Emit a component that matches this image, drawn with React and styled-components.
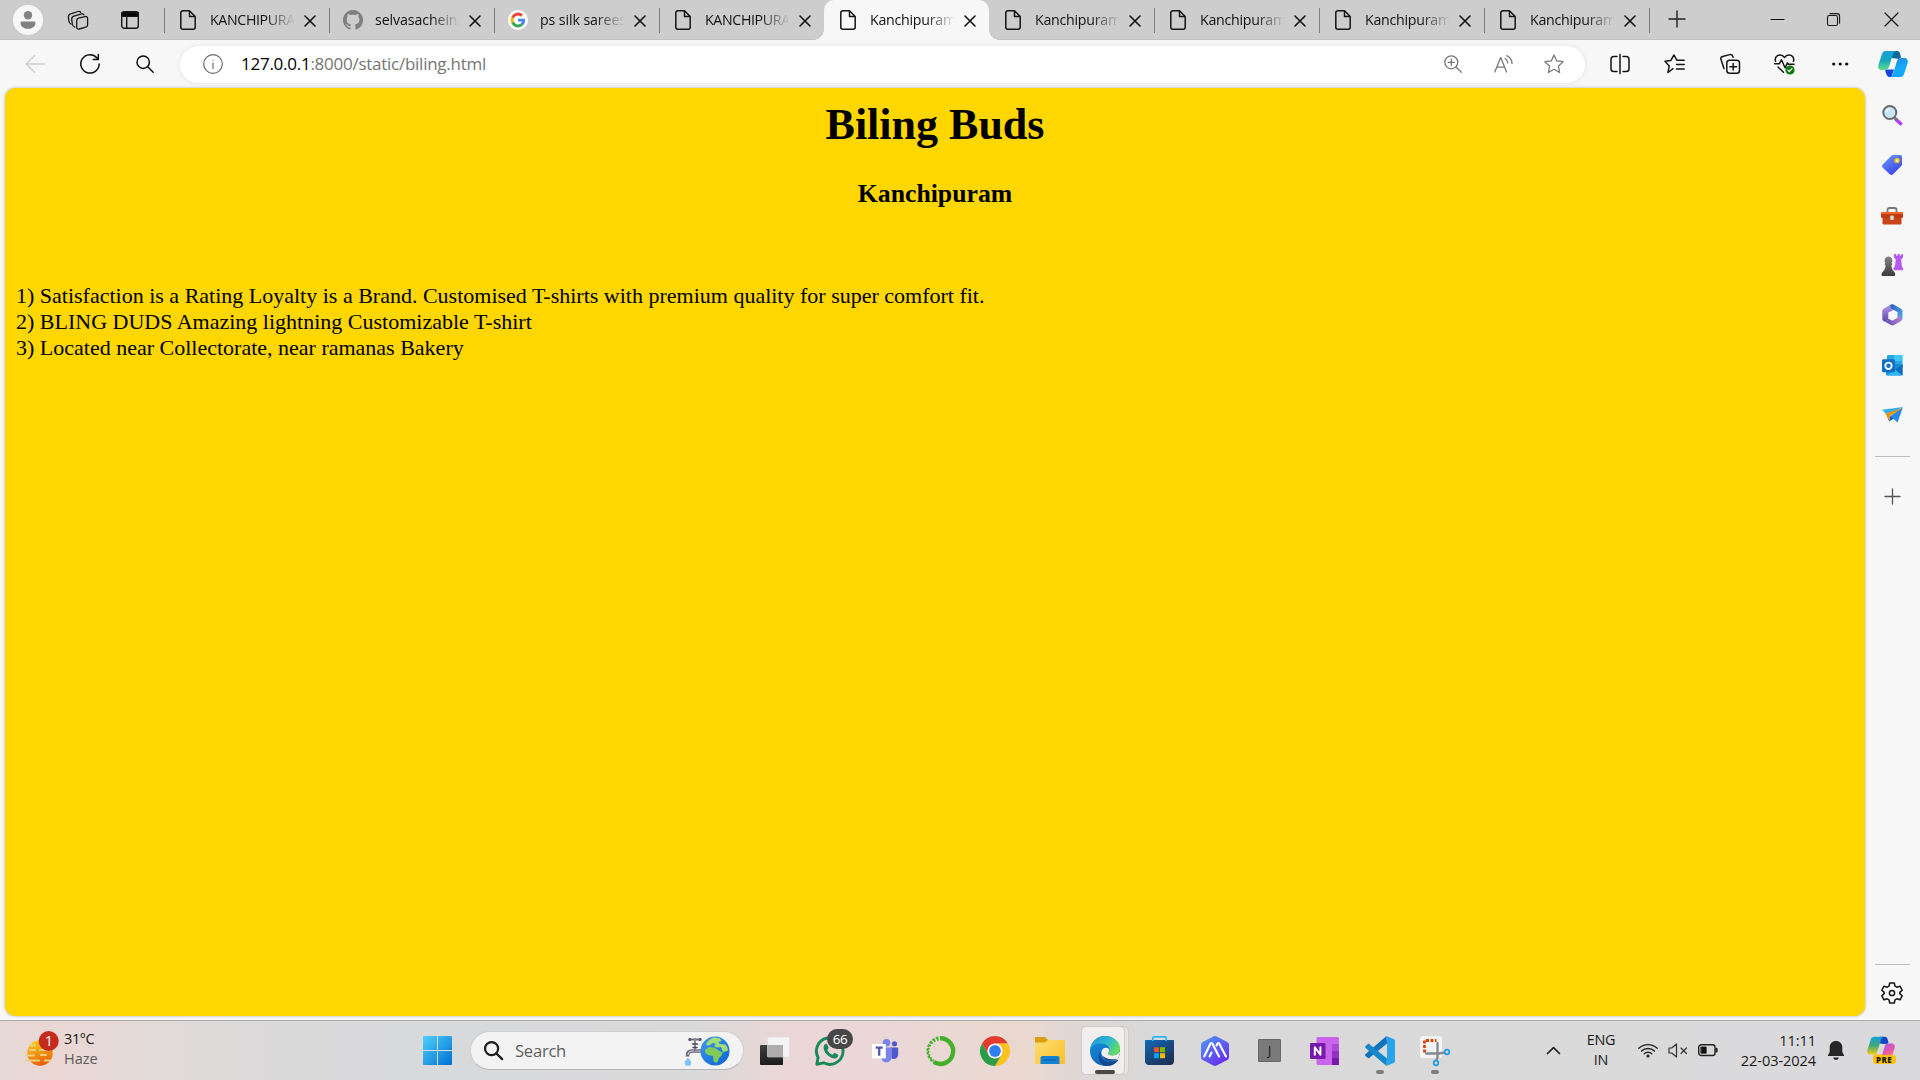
import React from "react";
import styled, { createGlobalStyle } from "styled-components";

const GlobalStyle = createGlobalStyle`
  * { box-sizing: border-box; }
  html, body { margin: 0; padding: 0; overflow: hidden; }
  body { font-family: "Open Sans", "Noto Sans", sans-serif; color: #1b1b1b; }
`;

const Screen = styled.div`
  width: 1920px;
  height: 1080px;
  display: flex;
  flex-direction: column;
  overflow: hidden;
  background: #f7f7f7;
`;

const Glyph = styled.svg.attrs((p) => ({
  width: p.$w,
  height: p.$h || p.$w,
  viewBox: p.viewBox || `0 0 ${p.$w} ${p.$h || p.$w}`,
}))`
  display: block;
  flex: none;
  overflow: visible;
  fill: ${(p) => p.$fill || "none"};
  stroke: ${(p) => p.$stroke || "none"};
  stroke-width: ${(p) => p.$sw || 1.4};
  stroke-linecap: round;
  stroke-linejoin: round;
`;

const Slot = styled.div`
  width: ${(p) => p.$w}px;
  height: ${(p) => (p.$h ? `${p.$h}px` : "100%")};
  flex: none;
  display: flex;
  align-items: center;
  justify-content: center;
`;

/* ---------- Tab strip ---------- */

const TabStrip = styled.div`
  height: 40px;
  flex: none;
  display: flex;
  align-items: stretch;
  background: #cdcdcd;
  box-shadow: inset 0 -1px 0 #c2c2c2;
  padding-left: 3px;
`;

const Avatar = styled.div`
  width: 30px;
  height: 30px;
  border-radius: 50%;
  background: #f7f7f7;
  display: flex;
  align-items: center;
  justify-content: center;
`;

const Tabs = styled.div`
  display: flex;
  padding-left: 8px;
`;

const Tab = styled.div`
  position: relative;
  width: 165px;
  display: flex;
  align-items: center;
  padding-left: 14px;
  border-radius: ${(p) => (p.$active ? "10px 10px 0 0" : "0")};
  background: ${(p) => (p.$active ? "#f7f7f7" : "transparent")};

  &::before {
    content: "";
    display: ${(p) => (p.$line ? "block" : "none")};
    position: absolute;
    left: 0;
    top: 8px;
    width: 1px;
    height: 25px;
    background: #7d7d7d;
  }
`;

const Flare = styled.span`
  position: absolute;
  bottom: 0;
  ${(p) => (p.$right ? "right: -10px;" : "left: -10px;")}
  width: 10px;
  height: 10px;
  background: radial-gradient(
    circle at ${(p) => (p.$right ? "100%" : "0")} 0,
    transparent 9.5px,
    #f7f7f7 10px
  );
`;

const Favicon = styled.div`
  width: 20px;
  height: 20px;
  display: flex;
  align-items: center;
  justify-content: center;
`;

const TabTitle = styled.div`
  width: 84px;
  margin-left: 12px;
  overflow: hidden;
  white-space: nowrap;
  font-size: 14.2px;
  line-height: 22px;
  letter-spacing: ${(p) => p.$ls ?? -0.25}px;
  color: #111;
  mask-image: linear-gradient(to right, #000 66%, transparent 101%);
`;

const TabClose = styled.div`
  margin-left: 11px;
  padding-top: 1px;
  display: flex;
`;

const EndTab = styled.div`
  width: 1px;
  height: 25px;
  margin-top: 8px;
  background: #7d7d7d;
`;

const Spacer = styled.div`
  flex: 1;
`;

const WindowButtons = styled.div`
  display: flex;
`;

/* ---------- Toolbar ---------- */

const Toolbar = styled.div`
  height: 48px;
  flex: none;
  display: flex;
  align-items: center;
  padding-left: 8px;
`;

const AddressBar = styled.div`
  width: 1405px;
  height: 37px;
  flex: none;
  display: flex;
  align-items: center;
  margin-left: 8px;
  border-radius: 19px;
  background: #fff;
  box-shadow: 0 0 5px rgba(0, 0, 0, 0.09);
  padding: 0 6px 0 10px;
`;

const Url = styled.div`
  margin-left: 5px;
  flex: 1;
  font-size: 17px;
  line-height: 22px;
  padding-bottom: 1px;
  letter-spacing: -0.26px;
  color: #757575;
  white-space: nowrap;
`;

const Host = styled.span`
  color: #000;
`;

/* ---------- Middle area ---------- */

const Middle = styled.div`
  height: 932px;
  flex: none;
  display: flex;
  padding-left: 5px;
`;

const Page = styled.main`
  width: 1860px;
  height: 928px;
  border-radius: 10px;
  background: #ffd700;
  box-shadow: 0 0 3px rgba(0, 0, 0, 0.3);
  padding: 11px;
  font-family: "Liberation Serif", "Times New Roman", serif;
  color: #000;
`;

const Heading = styled.h1`
  margin: 0;
  text-align: center;
  font-size: 44px;
  line-height: 51px;
`;

const SubHeading = styled.h3`
  margin: 29px 0 0;
  text-align: center;
  font-size: 25.74px;
  line-height: 30px;
`;

const Lines = styled.div`
  margin-top: 74px;
  font-size: 22px;
  line-height: 26px;
`;

const Line = styled.div`
  white-space: nowrap;
`;

const Sidebar = styled.aside`
  width: 54px;
  height: 932px;
  display: flex;
  flex-direction: column;
  align-items: center;
  padding-top: 2px;
`;

const Divider = styled.div`
  width: 35px;
  height: 1px;
  flex: none;
  margin-top: ${(p) => p.$top || 0}px;
  background: #bdbdbd;
`;

/* ---------- Taskbar ---------- */

const Taskbar = styled.footer`
  height: 60px;
  flex: none;
  display: flex;
  align-items: center;
  border-top: 1px solid #ababab;
  background: linear-gradient(
    to right,
    #e6d8d6 0,
    #ead7d4 60px,
    #e0dad9 170px,
    #dadadb 300px,
    #d8d9db 480px,
    #dad9da 700px,
    #ead6d7 780px,
    #ebd6d8 880px,
    #ead9d2 960px,
    #ead8cf 1030px,
    #dcd8d6 1090px,
    #d9d9d9 1150px,
    #dadadc 1920px
  );
`;

const Weather = styled.div`
  width: 404px;
  display: flex;
  align-items: center;
  padding: 0 0 3px 24px;
`;

const WeatherText = styled.div`
  margin-left: 5px;
  font-size: 14.5px;
  line-height: 20px;
  letter-spacing: -0.4px;
  color: #1a1a1a;
`;

const Muted = styled.div`
  color: #5c5a5a;
  letter-spacing: 0;
`;

const StartSlot = styled.div`
  width: 66px;
  display: flex;
  align-items: center;
  justify-content: center;
`;

const SearchPill = styled.div`
  width: 274px;
  height: 39px;
  flex: none;
  display: flex;
  align-items: center;
  border-radius: 20px;
  background: #f3f3f4;
  border: 1px solid #cfcfd0;
  border-bottom-color: #b4b4b6;
  padding: 0 13px 0 13px;
`;

const SearchLabel = styled.span`
  flex: 1;
  margin-left: 12px;
  font-size: 16.6px;
  letter-spacing: -0.25px;
  color: #5f5f5f;
`;

const Apps = styled.div`
  display: flex;
  height: 100%;
  padding-left: 3px;
`;

const AppButton = styled.div`
  position: relative;
  width: 55px;
  display: flex;
  align-items: center;
  justify-content: center;
`;

const AppTile = styled.div`
  position: relative;
  width: 48px;
  height: 49px;
  border-radius: 5px;
  display: flex;
  align-items: center;
  justify-content: center;
  background: ${(p) => (p.$active ? "#e8e4e2" : "transparent")};
  border: 1px solid ${(p) => (p.$active ? "#d2cdcb" : "transparent")};
`;

const FrontCard = styled.span`
  position: absolute;
  left: -1px;
  top: -1px;
  width: 44px;
  height: 49px;
  border-radius: 5px;
  background: #f1eeed;
  border: 1px solid #d0cccb;
  display: flex;
  align-items: center;
  justify-content: center;
`;

const IconHolder = styled.span`
  position: relative;
  display: flex;
`;

const RunMark = styled.span`
  position: absolute;
  bottom: 6px;
  left: 50%;
  width: ${(p) => p.$w}px;
  height: 4px;
  margin-left: ${(p) => -p.$w / 2}px;
  border-radius: 2px;
  background: ${(p) => (p.$w > 10 ? "#4c4745" : "#7d7d7d")};
`;

const Badge = styled.span`
  position: absolute;
  left: 25px;
  top: 8px;
  width: 26px;
  height: 20px;
  border-radius: 10px;
  background: #474747;
  color: #fff;
  font-size: 13.5px;
  line-height: 20px;
  letter-spacing: -0.5px;
  text-align: center;
`;

const Tray = styled.div`
  display: flex;
  align-items: center;
  height: 100%;
  padding-bottom: 1px;
`;

const Lang = styled.div`
  width: 60px;
  text-align: center;
  font-size: 14.4px;
  line-height: 20px;
  letter-spacing: -0.2px;
`;

const Clock = styled.div`
  width: 91px;
  text-align: right;
  font-size: 14.6px;
  line-height: 20px;
  letter-spacing: -0.1px;
  white-space: nowrap;
`;

/* ---------- Small drawings ---------- */

const Person = () => (
  <Glyph $w={16} $h={18} $fill="#828282">
    <circle cx="8" cy="4.2" r="4.2" />
    <path d="M1.8 10.5h12.4c.8 0 1.3.5 1.3 1.2 0 3.600-3.200 6.100-7.500 6.100S.5 15.300.5 11.700c0-.7.5-1.200 1.300-1.200Z" />
  </Glyph>
);

const Workspaces = () => (
  <Glyph $w={22} $h={20} $stroke="#1b1b1b" $sw="1.3">
    <path d="M11.500 8.200L18 6.600c1.500-.4 2.600.3 2.600 1.800v6.400c0 1.300-.6 2.100-1.800 2.400L12.300 19c-1.500.4-2.600-.3-2.600-1.800v-6.500c0-1.300.6-2.200 1.800-2.500Z" />
    <path d="M7.800 17.200C6 16.500 5.600 15.600 5.300 14L4.700 9.500c-.2-1.800.5-2.900 2.300-3.400L14.500 3.900c1.100-.3 2 .1 2.500.9" />
    <path d="M4 14.200C2.400 13.600 2.100 12.500 1.900 11L1.400 7.300C1.200 5.500 1.900 4.400 3.600 3.900L11 1.500c1.200-.4 2.200 0 2.700.9" />
  </Glyph>
);

const TabMenu = () => (
  <Glyph $w={18} $h={18} $stroke="#151515">
    <rect x=".7" y=".7" width="16.600" height="16.600" rx="2.600" />
    <path d="M1 1.500h16v3.800H1z" fill="#000" />
    <path d="M5.700 6v11" />
  </Glyph>
);

const Doc = () => (
  <Glyph $w={16} $h={20} $stroke="#151515" $sw="1.5">
    <path d="M2.800.8h6.700l5.700 5.700v10.700a2 2 0 0 1-2 2H2.800a2 2 0 0 1-2-2V2.800a2 2 0 0 1 2-2ZM9.500 1v5.500h5.500" />
  </Glyph>
);

const GitHub = () => (
  <Glyph $w={20} viewBox="0 0 16 16" $fill="#7f7f7f">
    <path d="M8 0C3.580 0 0 3.580 0 8c0 3.540 2.290 6.530 5.470 7.590.4.07.55-.17.55-.38 0-.19-.01-.82-.01-1.490-2.010.37-2.530-.49-2.690-.94-.09-.23-.48-.94-.82-1.130-.28-.15-.68-.52-.01-.53.63-.01 1.080.58 1.230.82.72 1.210 1.870.87 2.330.66.07-.52.28-.87.51-1.070-1.780-.2-3.640-.89-3.640-3.950 0-.87.31-1.590.82-2.150-.08-.2-.36-1.020.08-2.120 0 0 .67-.21 2.200.82.64-.18 1.320-.27 2-.27s1.360.09 2 .27c1.530-1.040 2.200-.82 2.200-.82.44 1.100.16 1.920.08 2.120.51.56.82 1.270.82 2.150 0 3.070-1.870 3.750-3.650 3.950.29.25.54.73.54 1.480 0 1.070-.01 1.930-.01 2.200 0 .21.15.46.55.38A8.010 8.010 0 0 0 16 8c0-4.420-3.580-8-8-8Z" />
  </Glyph>
);

const Google = () => (
  <Glyph $w={20}>
    <circle cx="10" cy="10" r="10" fill="#fff" />
    <g transform="translate(2.600 2.600) scale(.308)">
      <path fill="#4285f4" d="M47 24.500c0-1.600-.1-3.100-.4-4.500H24v9h13c-.6 3-2.300 5.500-4.800 7.200l7.300 5.700C44.500 38 47 31.800 47 24.500Z" />
      <path fill="#fbbc05" d="M10.500 28.600a14 14 0 0 1 0-9.200l-8-6.200a24 24 0 0 0 0 21.600Z" />
      <path fill="#34a853" d="M24 48c6.500 0 11.900-2.100 15.900-5.800l-7.700-6A14.500 14.500 0 0 1 10.500 28.600l-8 6.200C6.500 42.600 14.600 48 24 48Z" />
      <path fill="#ea4335" d="M24 9.500c3.500 0 6.700 1.200 9.200 3.600L40 6.200A24 24 0 0 0 2.500 13.200l8 6.200A14.300 14.300 0 0 1 24 9.500Z" />
    </g>
  </Glyph>
);

const Cross = ({ size = 10, sw = 1.6 }) => (
  <Glyph $w={size} viewBox="0 0 10 10" $stroke="#111" $sw={sw}>
    <path d="M0 0l10 10M10 0L0 10" />
  </Glyph>
);

const Plus = ({ size = 16, color = "#222" }) => (
  <Glyph $w={size} viewBox="0 0 16 16" $stroke={color} $sw="1.4">
    <path d="M8 0v16M0 8h16" />
  </Glyph>
);

const Restore = () => (
  <Glyph $w={13} $stroke="#1a1a1a" $sw="1.100">
    <rect x=".5" y="2.500" width="10" height="10" rx="1.800" />
    <path d="M3 .6h7a2.600 2.600 0 0 1 2.600 2.600v7" />
  </Glyph>
);

const Back = () => (
  <Glyph $w={20} $h={18} $stroke="#cfcfcf" $sw="1.400">
    <path d="M9.500 .8L1 9l8.500 8.200M1 9h18.500" />
  </Glyph>
);

const Refresh = () => (
  <Glyph $w={20} $stroke="#111" $sw="1.500">
    <path d="M19.200 10A9.200 9.200 0 1 1 17 3.900L18.300 5.500M18.300.5v5h-5" />
  </Glyph>
);

const Magnifier = ({ size = 18, sw = 1.5, color = "#111" }) => (
  <Glyph $w={size} viewBox="0 0 18 18" $stroke={color} $sw={sw}>
    <circle cx="7.200" cy="7.200" r="6.200" />
    <path d="M11.700 11.700l5.500 5.500" />
  </Glyph>
);

const Info = () => (
  <Glyph $w={20} $stroke="#6d6d6d" $sw="1.200">
    <circle cx="10" cy="10" r="9.300" />
    <path d="M10 9v5.500" />
    <circle cx="10" cy="6.200" r=".6" fill="#6d6d6d" stroke="none" />
  </Glyph>
);

const ZoomIn = () => (
  <Glyph $w={18} $stroke="#777" $sw="1.300">
    <circle cx="7.300" cy="7.300" r="6.500" />
    <path d="M12 12l5.300 5.300M7.300 4.200v6.200M4.200 7.300h6.200" />
  </Glyph>
);

const ReadAloud = () => (
  <Glyph $w={19} $h={18} $stroke="#777" $sw="1.300">
    <path d="M.8 17L6.700 2.500 12.600 17M2.700 12.200h8" />
    <path d="M11.200 3.500c1.600 1 2.400 2.400 2.500 4.400M12.800.7c3.300 1.500 5 4 5.200 7.800" />
  </Glyph>
);

const starPath = "M10 1l2.700 5.900 6.400.8-4.700 4.400 1.200 6.400L10 15.300l-5.600 3.200 1.200-6.400L.9 7.700l6.400-.8Z";

const Star = () => (
  <Glyph $w={20} $stroke="#777" $sw="1.300">
    <path d={starPath} />
  </Glyph>
);

const SplitScreen = () => (
  <Glyph $w={20} $h={20} $stroke="#151515" $sw="1.500">
    <path d="M7 2.500H3.800A2.800 2.800 0 0 0 1 5.300v9.400a2.800 2.800 0 0 0 2.800 2.800H7M13 2.500h3.200A2.800 2.800 0 0 1 19 5.300v9.400a2.800 2.800 0 0 1-2.800 2.800H13M10 .5v19" />
  </Glyph>
);

const Favorites = () => (
  <Glyph $w={21} $h={20} $stroke="#151515" $sw="1.500">
    <path d="M9 14.700l-5 3.800 1.200-6.600L1 7.300l5.700-.7L10 1l2.800 5.200" />
    <path d="M13.500 6.200h6.700M12.500 10.500h7.700M12.500 15h7.700" />
  </Glyph>
);

const Collections = () => (
  <Glyph $w={20} $h={20} $stroke="#151515" $sw="1.500">
    <rect x="6.800" y="6.300" width="12.700" height="13" rx="2.800" />
    <path d="M13.200 9.500v6.600M9.900 12.800h6.600" />
    <path d="M4 14.500L1 5.600c-.5-1.600 0-2.600 1.600-3.100L9.700.6c1.600-.4 2.600.2 3.100 1.800l.3 1" />
  </Glyph>
);

const Health = () => (
  <Glyph $w={21} $h={20} $stroke="#151515" $sw="1.500">
    <path d="M1.500 7.300C.5 3.500 3 1 6 1c2 0 3.500 1 4.500 2.500C11.500 2 13 1 15 1c3 0 5.500 2.500 4.500 6.300M4 13l5.500 5.200" />
    <path d="M.7 9.800h4.500l2.300-4 3.500 8 2.500-5 1 1.500h5.500" />
    <circle cx="16" cy="16" r="4.600" fill="#0e7a0d" stroke="none" />
    <path d="M13.900 16.100l1.400 1.400 2.700-2.800" stroke="#fff" strokeWidth="1.200" />
  </Glyph>
);

const Dots = () => (
  <Glyph $w={16} $h={4} $fill="#111">
    <circle cx="1.700" cy="2" r="1.600" />
    <circle cx="8.200" cy="2" r="1.600" />
    <circle cx="14.700" cy="2" r="1.600" />
  </Glyph>
);

const Copilot = ({ size = 30, pre }) => (
  <Glyph $w={size} viewBox="0 0 30 28">
    <defs>
      <linearGradient id={pre ? "cpA" : "cpB"} x1="0" y1="0" x2="0" y2="1">
        <stop offset="0" stopColor="#14a2dc" />
        <stop offset=".5" stopColor={pre ? "#43a878" : "#16a6bb"} />
        <stop offset="1" stopColor={pre ? "#f5cc18" : "#61df8b"} />
      </linearGradient>
      <linearGradient id={pre ? "cpC" : "cpD"} x1="0" y1="0" x2=".4" y2="1">
        <stop offset="0" stopColor={pre ? "#a44ee6" : "#247fdb"} />
        <stop offset=".6" stopColor={pre ? "#e95aa8" : "#16a9f7"} />
        <stop offset="1" stopColor={pre ? "#ff8a5a" : "#14a8ff"} />
      </linearGradient>
    </defs>
    <path d="M14 1h5c2.500 0 3 2 4 6.500L20.500 9 14 8Z" fill={pre ? "#1946c8" : "#0c6b98"} />
    <path d="M7 19.500h9l-2.500 7.500h-2C9 27 8 24 7 19.500Z" fill={pre ? "#f7bd20" : "#1346dc"} />
    <path d="M7.500 1h10.200c-2 .5-2.700 3-3.600 6l-2.800 9c-.8 2.700-2 4-5 4H3.500C.5 20-.3 17.300.5 14.500L4 4C4.600 2 5.700 1 7.500 1Z" fill={`url(#${pre ? "cpA" : "cpB"})`} />
    <path d="M22.500 27H12.300c2-.5 2.700-3 3.600-6l2.800-9c.8-2.700 2-4 5-4h2.800c3 0 3.800 2.700 3 5.500L26 24c-.6 2-1.700 3-3.500 3Z" fill={`url(#${pre ? "cpC" : "cpD"})`} />
  </Glyph>
);

const SideSearch = () => (
  <Glyph $w={20}>
    <path d="M14 14.500l4.500 4" stroke="#b63cf5" strokeWidth="3.600" />
    <path d="M12.500 12.500l2 2" stroke="#777" strokeWidth="2.500" />
    <circle cx="7.800" cy="7.500" r="6.500" fill="#c6e5fa" stroke="#696969" strokeWidth="2" />
    <path d="M4.500 6.500a4 4 0 0 1 3-2.800" stroke="#f3fbff" strokeWidth="1.500" />
  </Glyph>
);

const Tag = () => (
  <Glyph $w={20}>
    <defs>
      <linearGradient id="tag" x1="0" y1="0" x2=".7" y2="1">
        <stop offset="0" stopColor="#6ba2ff" />
        <stop offset="1" stopColor="#3840ee" />
      </linearGradient>
    </defs>
    <path d="M11 0h7c1.300 0 2 .8 2 2v7c0 .9-.3 1.500-1 2.200l-8 8c-1 1-2.200 1-3.200 0L.8 12.800c-1-1-1-2.200 0-3.200L9 .9C9.600.3 10.200 0 11 0Z" fill="url(#tag)" />
    <circle cx="15" cy="5.500" r="2.200" fill="#fff3be" stroke="#e5b51a" strokeWidth="1.300" />
  </Glyph>
);

const Toolbox = () => (
  <Glyph $w={22} $h={18}>
    <g transform="translate(0 1)">
      <path d="M6.500 5V2.800C6.500 1.600 7.300 1 8.500 1h5c1.200 0 2 .6 2 1.800V5" stroke="#777" strokeWidth="1.800" />
      <path d="M1.500 10h19v6c0 1-.6 1.600-1.600 1.600H3.100c-1 0-1.600-.6-1.600-1.600Z" fill="#c8451a" />
      <path d="M1 5h20c.6 0 1 .4 1 1v1H0V6c0-.6.4-1 1-1Z" fill="#f0642c" />
      <path d="M0 7h22v2.500c0 1-.6 1.500-1.500 1.500h-19C.6 11 0 10.500 0 9.500Z" fill="#bd3c10" />
      <rect x="9.200" y="8.500" width="3.600" height="4.500" rx="1" fill="#d8d8d8" />
    </g>
  </Glyph>
);

const Chess = () => (
  <Glyph $w={22} $h={22}>
    <defs>
      <linearGradient id="pawn" x1="0" y1="0" x2="0" y2="1">
        <stop offset="0" stopColor="#858585" />
        <stop offset="1" stopColor="#3c3c3c" />
      </linearGradient>
    </defs>
    <path d="M13 0h2v1.500h1.700V0h2v1.500h1.700V0H22v3.500l-1.800 2 .6 6.500 1.200 2.500v1.800h-9.500v-1.800l1.500-2.500.8-6.500-1.800-2Z" fill="#b659f3" />
    <path d="M7.500 2.500a3.900 3.900 0 0 1 3 6.400c.9.200 1 1.800 0 2.100 0 3 .8 5.500 3 7l.5 1.200c.4.800.2 2.800-.8 2.800H1.500c-1 0-1.200-2-.7-2.800L1.500 18c2-1.500 3-4 3-7-1-.3-.9-1.900 0-2.100a3.900 3.900 0 0 1 3-6.400Z" fill="url(#pawn)" />
  </Glyph>
);

const M365 = () => (
  <Glyph $w={21} $h={22}>
    <defs>
      <linearGradient id="mA" x1="0" y1="0" x2="0" y2="1">
        <stop offset="0" stopColor="#b79be8" />
        <stop offset="1" stopColor="#5c46b0" />
      </linearGradient>
      <linearGradient id="mB" x1="0" y1="0" x2="1" y2="1">
        <stop offset="0" stopColor="#2a5bbd" />
        <stop offset="1" stopColor="#4fb4ee" />
      </linearGradient>
      <linearGradient id="mC" x1="0" y1="0" x2="1" y2="0">
        <stop offset="0" stopColor="#5b4bb5" />
        <stop offset="1" stopColor="#b184cf" />
      </linearGradient>
    </defs>
    <path d="M8 1L2 4.500C.8 5.200.3 6.200.3 7.300v7.400c0 1.200.6 2 1.500 2.600 2 .9 4.500-.3 4.500-2.800V8.500l6-3L10.500.3C9.700.2 8.900.4 8 1Z" fill="url(#mA)" />
    <path d="M9 .6c1-.5 2-.4 3 .2l7 4c1 .6 1.500 1.500 1.500 2.600v7c0 .8-.2 1.500-.8 2-.7-2.700-2.200-4-4.200-5.100V8L10 5C8 3.700 7.500 1.700 9 .6Z" fill="url(#mB)" />
    <path d="M20 15.500c-.2.700-.7 1.300-1.400 1.700l-6.500 3.900c-1 .6-2.200.6-3.200 0L2 17.300c2.300.5 4.300-.3 4.300-2.800l4 2.300 5.200-3V11c2.300 1.100 4.300 2.500 4.500 4.500Z" fill="url(#mC)" />
    <circle cx="10.500" cy="11" r="3.500" fill="#f7f7f7" />
  </Glyph>
);

const Outlook = () => (
  <Glyph $w={21} $h={21}>
    <rect x="5" y="0" width="15.500" height="13" rx="1" fill="#28a8ea" />
    <path d="M12 0h8.500v6H12z" fill="#50d9ff" opacity=".6" />
    <path d="M4 9l16.500 0v10.300c0 .7-.5 1.200-1.200 1.200H5.200C4.500 20.500 4 20 4 19.300Z" fill="#1490df" />
    <path d="M20.500 9.500v11L12 15Z" fill="#0f6cbd" />
    <path d="M5 20.500l8-6 7 6Z" fill="#35b8f1" />
    <rect x="0" y="4.300" width="13" height="13" rx="1.200" fill="#0f6fc6" />
    <circle cx="6.500" cy="10.800" r="3.200" stroke="#fff" strokeWidth="1.900" />
  </Glyph>
);

const Plane = () => (
  <Glyph $w={21} $h={16}>
    <path d="M0 2.800L21 0 5.500 8.500Z" fill="#34b1f5" />
    <path d="M21 0L15.500 15.500 8.500 9Z" fill="#2489e8" />
    <path d="M3.500 6.500L21 .8 8.500 8.500 6.800 14Z" fill="#e9920c" />
    <path d="M6.800 14.500l1.700-5.700 3.300 3Z" fill="#0d5fc2" />
  </Glyph>
);

const Gear = () => (
  <Glyph $w={22} viewBox="0 0 22 22" $stroke="#151515" $sw="1.500">
    <path d="M8.700 1h4.600l.7 3.200 1.800 1L19 4.200l2.200 4L18.800 10.400v1.200l2.400 2.200-2.200 4-3.200-1-1.800 1-.7 3.200H8.700L8 17.800l-1.800-1-3.200 1-2.200-4 2.400-2.200v-1.200L.8 8.200l2.200-4 3.200 1 1.800-1Z" />
    <circle cx="11" cy="11" r="2.600" />
  </Glyph>
);

const Haze = () => (
  <Glyph $w={35} $h={36}>
    <defs>
      <linearGradient id="sun" x1=".3" y1="0" x2=".6" y2="1">
        <stop offset="0" stopColor="#fcc811" />
        <stop offset="1" stopColor="#e85e0b" />
      </linearGradient>
    </defs>
    <circle cx="16" cy="22" r="12.700" fill="url(#sun)" />
    <path d="M6 14.300h5M6 19h5M17 24h5M2 24.500h8M2 29.500h13M21 29.500h6M16 19h10" stroke="#e9cf82" strokeWidth="2.200" />
    <circle cx="24.700" cy="10" r="10" fill="#c42b1c" />
    <text x="24.900" y="15" textAnchor="middle" fontSize="14.500" fill="#fff">1</text>
  </Glyph>
);

const WindowsLogo = () => (
  <Glyph $w={29}>
    <defs>
      <linearGradient id="win" gradientUnits="userSpaceOnUse" x1="0" y1="0" x2="29" y2="29">
        <stop offset="0" stopColor="#4fd0ff" />
        <stop offset="1" stopColor="#0070d0" />
      </linearGradient>
    </defs>
    <path d="M1 0h13v14H0V1a1 1 0 0 1 1-1ZM15 0h13a1 1 0 0 1 1 1v13H15ZM0 15h14v14H1a1 1 0 0 1-1-1ZM15 15h14v13a1 1 0 0 1-1 1H15Z" fill="url(#win)" />
  </Glyph>
);

const WaterEarth = () => (
  <Glyph $w={46} $h={30}>
    <defs>
      <linearGradient id="sea" x1="0" y1="0" x2=".8" y2="1">
        <stop offset="0" stopColor="#3f9bef" />
        <stop offset="1" stopColor="#1268d3" />
      </linearGradient>
    </defs>
    <path d="M3.500 20.500v-1c0-3 1.500-4.500 4.500-4.500h10" stroke="#6d687c" strokeWidth="3.600" strokeLinecap="butt" />
    <path d="M4 18.500c.5-2.500 2-3.500 4-3.500h9" stroke="#c9c6d6" strokeWidth="1.100" />
    <path d="M11 3v11M6 3.500h10" stroke="#716c80" strokeWidth="2" />
    <circle cx="5.800" cy="3.500" r="1.600" fill="#5b566b" /><circle cx="16.200" cy="3.500" r="1.600" fill="#5b566b" />
    <path d="M11 3v10" stroke="#b7b4c4" strokeWidth=".8" />
    <path d="M8.500 8h5M9 11.500h4" stroke="#4e4a5b" strokeWidth="1.600" />
    <path d="M4 21.500c2 2.500 3.300 4 3.300 5.300a3.300 3.300 0 0 1-6.600 0c0-1.300 1.300-2.800 3.300-5.300Z" fill="#82c4f7" />
    <circle cx="31" cy="15" r="14.500" fill="url(#sea)" />
    <path d="M22 9c1-4 4-6.500 8-7.500l6 .7 1.500 2.800-3 1 1 2 6 .5c1.500 2 2.500 4 2.500 6l-3 1-2 .5-2-5-4 .5-3-1.500 2-2-3-1-4 2.500Z" fill="#a2dd75" />
    <path d="M21 14l4-3 6 .8 5.500 3.700 2.500.5-1.500 3.500-2.500 2.500-1.500 4-2 .7-2-1.700-.5-5-5-1L21 16.500Z" fill="#80c95a" />
  </Glyph>
);

const TaskView = () => (
  <Glyph $w={30} $h={28}>
    <defs>
      <linearGradient id="tvA" x1="0" y1="0" x2="0" y2="1">
        <stop offset="0" stopColor="#3f3f3f" />
        <stop offset="1" stopColor="#1c1c1c" />
      </linearGradient>
    </defs>
    <rect x="0" y="8" width="23" height="20" rx="1" fill="url(#tvA)" />
    <rect x="7.500" y="0" width="22" height="20" rx="1" fill="#f4f4f4" stroke="#dcdcdc" strokeWidth=".6" />
    <path d="M7.500 8H23v12H7.500z" fill="#aeacac" />
  </Glyph>
);

const WhatsApp = () => (
  <Glyph $w={30} $h={30}>
    <path d="M1.800 28.300l1.300-6.800A13.300 13.300 0 1 1 8.500 26.800Z" stroke="#178a58" strokeWidth="2.900" />
    <path d="M9.500 8.500c1-1 2.200-1 2.800.2l1.200 2.600c.4 1-.8 2-1.200 2.600 1.200 2.300 2.800 3.800 5.200 4.800.9-.7 1.600-2 2.600-1.600l2.600 1.400c.9.500.6 1.900-.2 2.700-2.200 2.200-5.200 1.400-8.200-.6-3.400-2.300-7.600-7.800-4.800-12.100Z" fill="#178a58" />
  </Glyph>
);

const Teams = () => (
  <Glyph $w={26} $h={24}>
    <circle cx="22.500" cy="4.800" r="2.600" fill="#5059c9" />
    <circle cx="14.500" cy="3.800" r="3.800" fill="#7b83eb" />
    <path d="M18 8.500h7c.7 0 1.200.5 1.200 1.200V15c0 3-1.900 5-4.200 5s-4-2-4-5Z" fill="#5059c9" />
    <path d="M9 8.500h11v8.300c0 3.900-2.500 6.700-5.800 6.700S9 20.700 9 16.800Z" fill="#7b83eb" />
    <rect x="0" y="5" width="13.800" height="14.400" fill="#fff" />
    <path d="M3.700 8.700h7M7.200 8.700v8" stroke="#5558af" strokeWidth="2.300" strokeLinecap="butt" />
  </Glyph>
);

const Anaconda = () => (
  <Glyph $w={30} $h={30}>
    <path d="M15 2.300a12.800 12.800 0 1 1-6 23.900" stroke="#43b02a" strokeWidth="4.400" strokeLinecap="butt" />
    <path d="M10.500 27.200A13.500 13.500 0 0 1 14.500 1.500" stroke="#43b02a" strokeWidth="2.200" strokeDasharray="2.600 1.300" strokeLinecap="butt" />
    <path d="M9 24.800A11.300 11.300 0 0 1 13.500 3.900" stroke="#43b02a" strokeWidth="1.900" strokeDasharray="1.600 1.700" strokeLinecap="butt" />
  </Glyph>
);

const Chrome = () => (
  <Glyph $w={30} $h={30}>
    <path d="M2 7.500A15 15 0 0 1 28 7.500H15A7.500 7.500 0 0 0 8.500 18.750Z" fill="#e33b2e" />
    <path d="M28 7.500A15 15 0 0 1 15 30l6.500-11.250A7.500 7.500 0 0 0 15 7.500Z" fill="#fcc31e" />
    <path d="M2 7.500l6.500 11.250A7.500 7.500 0 0 0 21.500 18.750L15 30A15 15 0 0 1 2 7.500Z" fill="#2d9c48" />
    <circle cx="15" cy="15" r="7.300" fill="#fff" />
    <circle cx="15" cy="15" r="5.900" fill="#2f7df0" />
  </Glyph>
);

const Folder = () => (
  <Glyph $w={30} $h={27}>
    <defs>
      <linearGradient id="fold" x1="0" y1="0" x2="1" y2="1">
        <stop offset="0" stopColor="#ffdf74" />
        <stop offset="1" stopColor="#fbbd27" />
      </linearGradient>
    </defs>
    <path d="M1 0h9l3 3V8H0V1c0-.6.4-1 1-1Z" fill="#dc9d0c" />
    <path d="M0 5.500h9.500l3.500-2.500h16c.6 0 1 .4 1 1V26c0 .6-.4 1-1 1H1c-.6 0-1-.4-1-1Z" fill="url(#fold)" />
    <path d="M7.500 19h15c1.300 0 2 .7 2 2v6h-19v-6c0-1.300.7-2 2-2Z" fill="#1681d2" />
    <path d="M9 23h12" stroke="#0b5a9d" strokeWidth="1.200" />
  </Glyph>
);

const Edge = () => (
  <Glyph $w={30} $h={30}>
    <defs>
      <linearGradient id="edA" x1="0" y1=".2" x2="1" y2=".7">
        <stop offset="0" stopColor="#2196d8" />
        <stop offset=".5" stopColor="#2ab9d0" />
        <stop offset="1" stopColor="#6ae453" />
      </linearGradient>
      <linearGradient id="edB" x1="0" y1="0" x2=".5" y2="1">
        <stop offset="0" stopColor="#1795df" />
        <stop offset="1" stopColor="#0f62b8" />
      </linearGradient>
    </defs>
    <circle cx="15" cy="15" r="15" fill="url(#edB)" />
    <path d="M.2 13.500C1 6 7 0 15 0s15 5.500 15 12c0 4.600-3.300 7.600-7.500 7.600-3 0-4.500-.8-4.500-2 0-1 1.500-1.600 1.500-3.800 0-3.300-3.500-6.300-8.500-6.300C6 7.500 2 9.500.2 13.500Z" fill="url(#edA)" />
    <path d="M10.800 15c-1.500 5 1 9 5 10.300 4.500 1.400 8.500.2 11.300-1.300.8-.3 1 .4.600 1C25 28.500 20.500 30.500 16 30 9 28.500 6.500 20 10.800 15Z" fill="#12468f" />
    <path d="M19.400 14.500c-.2 1.500-1.400 2.200-1.400 3.100 0 1.200 1.500 2 4.500 2 3 0 5.500-1.300 6.900-3.600L30 15c0 3.200-1 6-2.600 8.200-3 1.900-7.500 2.300-11 .6-5.500-2.700-6.400-8.500-3-11.200 2.500-1.800 6-.6 6 1.900Z" fill="#f1eeed" />
    <path d="M27.300 23.300c-3 1.700-7 2.200-10.500.9-2.700-1-4.300-3-4.600-5.200 1.500 2 4 3.500 7 3.900 3 .4 6 .1 8.100.4Z" fill="#12468f" />
  </Glyph>
);

const Store = () => (
  <Glyph $w={29} $h={29}>
    <defs>
      <linearGradient id="store" x1="0" y1="0" x2=".7" y2="1">
        <stop offset="0" stopColor="#1168b8" />
        <stop offset="1" stopColor="#1d3155" />
      </linearGradient>
    </defs>
    <path d="M1 4h27c.6 0 1 .4 1 1V25c0 2.500-1.500 4-4 4H4c-2.500 0-4-1.500-4-4V5c0-.6.4-1 1-1Z" fill="url(#store)" />
    <path d="M7.800 5V2c0-.7.400-1.100 1.100-1.100h11.200c.7 0 1.100.4 1.100 1.100V5" stroke="#2ab6ee" strokeWidth="1.700" strokeLinecap="butt" />
    <path d="M9 11.200h5v5H9z" fill="#f25022" /><path d="M15 11.200h5v5h-5z" fill="#7fba00" />
    <path d="M9 17.200h5v5H9z" fill="#00a4ef" /><path d="M15 17.200h5v5h-5z" fill="#ffb900" />
  </Glyph>
);

const HexApp = () => (
  <Glyph $w={28} $h={30}>
    <defs>
      <linearGradient id="hex" x1="0" y1="0" x2=".7" y2="1">
        <stop offset="0" stopColor="#4c9cf6" />
        <stop offset="1" stopColor="#6a2df0" />
      </linearGradient>
    </defs>
    <path d="M12.300.4c1.200-.6 2.200-.6 3.400 0L26.200 6c1.200.7 1.800 1.700 1.800 3v12c0 1.300-.6 2.300-1.800 3l-10.500 5.600c-1.200.6-2.200.6-3.400 0L1.800 24C.6 23.300 0 22.300 0 21V9c0-1.300.6-2.300 1.800-3Z" fill="url(#hex)" />
    <path d="M3.200 20.500L9.200 8c.7-1.300 1.700-1.300 2.400 0L18 20.500M8.500 20.500l2-3.800M15.500 9.500l.9-1.800c.6-1 1.300-1 1.900.1L25 20.500" stroke="#fff" strokeWidth="2.100" />
  </Glyph>
);

const LetterTile = styled.div`
  width: 23px;
  height: 23px;
  border: 1px solid #686868;
  border-radius: 1px;
  background: #7a7a7a;
  color: #222;
  font-size: 13.5px;
  line-height: 21px;
  text-align: center;
`;

const OneNote = () => (
  <Glyph $w={29} $h={28}>
    <rect x="6.500" y="0" width="22.500" height="28" rx="1.500" fill="#ca64ea" />
    <path d="M22 7h7v7h-7z" fill="#ae4bd5" /><path d="M22 14h7v7h-7z" fill="#9332bf" />
    <path d="M22 21h7v6c0 .6-.4 1-1 1h-6Z" fill="#7719aa" />
    <rect x="0" y="6" width="15.500" height="16" rx="1" fill="#7719aa" />
    <path d="M4.800 17.700V10.300l5.600 7.400v-7.400" stroke="#fff" strokeWidth="2" />
  </Glyph>
);

const VSCode = () => (
  <Glyph $w={30} $h={30}>
    <path d="M22 7.500L4.500 21.800c-.7.500-1.200.5-1.800 0L.6 20c-.7-.6-.7-1.300 0-1.900L21.500 0Z" fill="#0d72b8" />
    <path d="M22 22.500L4.500 8.200c-.7-.5-1.200-.5-1.800 0L.6 10c-.7.6-.7 1.300 0 1.900L21.500 30Z" fill="#1588ca" />
    <path d="M21.500 0l7.500 3.200c.6.300 1 .8 1 1.500v20.600c0 .7-.4 1.200-1 1.500L21.500 30c.4-.4.5-.8.500-1.300V1.300c0-.5-.1-.9-.5-1.300Z" fill="#28a3ee" />
  </Glyph>
);

const Snip = () => (
  <Glyph $w={30} $h={30}>
    <rect x="0" y="0" width="22" height="22" rx="2.500" fill="#f4f4f4" />
    <path d="M4.500 16.500V4.500H16.500" stroke="#d8430e" strokeWidth="2.800" strokeDasharray="3 1.500" strokeLinecap="butt" />
    <path d="M17.500 7v14.500L16.500 24M6 17.500h13l4.500-.8" stroke="#85898d" strokeWidth="2.300" />
    <circle cx="27" cy="16" r="2.300" stroke="#1e9de4" strokeWidth="1.700" />
    <circle cx="16" cy="27" r="2.300" stroke="#1e9de4" strokeWidth="1.700" />
  </Glyph>
);

const Chevron = () => (
  <Glyph $w={13} $h={7} $stroke="#222" $sw="1.700">
    <path d="M.5 6.500l6-5.800 6 5.800" />
  </Glyph>
);

const Wifi = () => (
  <Glyph $w={20} $h={15} $stroke="#202020" $sw="1.400">
    <path d="M.8 5.300a13.300 13.300 0 0 1 18.400 0M3.500 8a9.500 9.500 0 0 1 13 0M6.200 10.700a5.500 5.500 0 0 1 7.600 0" />
    <circle cx="10" cy="13" r="1.600" fill="#202020" stroke="none" />
  </Glyph>
);

const Mute = () => (
  <Glyph $w={20} $h={15} $stroke="#333" $sw="1.200">
    <path d="M1 5h2.700L8.500 1v13l-4.800-4H1ZM13 5l5.500 5.500M18.500 5L13 10.500" />
  </Glyph>
);

const Battery = () => (
  <Glyph $w={20} $h={12} $stroke="#222" $sw="1.400">
    <rect x=".7" y=".7" width="16.300" height="10.800" rx="2.600" />
    <path d="M3.200 3h5v6.200h-5z" fill="#111" stroke="#111" strokeWidth=".8" />
    <path d="M18.500 4.800v2.600" strokeWidth="2.200" />
  </Glyph>
);

const Bell = () => (
  <Glyph $w={16} $h={19} $fill="#262626">
    <path d="M8 0c3.700 0 6.300 2.600 6.300 6.300V11L16 14.200c.2.500 0 .9-.5.900H.5c-.5 0-.7-.4-.5-.9L1.700 11V6.300C1.700 2.600 4.300 0 8 0ZM5.200 16.500h5.600C10.500 18 9.500 18.900 8 18.900S5.500 18 5.200 16.500Z" />
  </Glyph>
);

const CopilotTray = styled.div`
  position: relative;
  width: 29px;
  height: 30px;
`;

const PreBadge = styled.span`
  position: absolute;
  left: 6px;
  top: 20px;
  width: 23px;
  height: 9px;
  border-radius: 3px;
  background: #fdc20b;
  color: #1d1a10;
  font-size: 8px;
  font-weight: 800;
  line-height: 9px;
  letter-spacing: 0.3px;
  text-align: center;
`;

const tabs = [
  { icon: Doc, title: "KANCHIPURAM", ls: -0.35, line: true },
  { icon: GitHub, title: "selvasachein/", ls: -0.1, line: true },
  { icon: Google, title: "ps silk sarees", ls: -0.1, line: true },
  { icon: Doc, title: "KANCHIPURAM", ls: -0.35, line: true },
  { icon: Doc, title: "Kanchipuram", active: true },
  { icon: Doc, title: "Kanchipuram" },
  { icon: Doc, title: "Kanchipuram", line: true },
  { icon: Doc, title: "Kanchipuram", line: true },
  { icon: Doc, title: "Kanchipuram", line: true },
];

const apps = [
  { icon: TaskView },
  { icon: WhatsApp, badge: "66" },
  { icon: Teams },
  { icon: Anaconda },
  { icon: Chrome },
  { icon: Folder },
  { icon: Edge, active: true, mark: 20 },
  { icon: Store },
  { icon: HexApp },
  { letter: "J" },
  { icon: OneNote },
  { icon: VSCode, mark: 8 },
  { icon: Snip, mark: 8 },
];

const sideIcons = [SideSearch, Tag, Toolbox, Chess, M365, Outlook, Plane];

export default function App() {
  return (
    <Screen>
      <GlobalStyle />
      <TabStrip>
        <Slot $w={50}><Avatar><Person /></Avatar></Slot>
        <Slot $w={50}><Workspaces /></Slot>
        <Slot $w={53}><TabMenu /></Slot>
        <Tabs>
          {tabs.map(({ icon: Icon, title, ls, line, active }, i) => (
            <Tab key={i} $line={line} $active={active}>
              {active && <Flare />}
              <Favicon><Icon /></Favicon>
              <TabTitle $ls={ls}>{title}</TabTitle>
              <TabClose><Cross /></TabClose>
              {active && <Flare $right />}
            </Tab>
          ))}
        </Tabs>
        <EndTab />
        <Slot $w={54} $h={38}><Plus /></Slot>
        <Spacer />
        <WindowButtons>
          <Slot $w={56} $h={38}>
            <Glyph $w={13} $h={1} $stroke="#111" $sw="1.100"><path d="M0 .5h13" /></Glyph>
          </Slot>
          <Slot $w={57} $h={39}><Restore /></Slot>
          <Slot $w={58} $h={39}><Cross size={13} sw={0.9} /></Slot>
        </WindowButtons>
      </TabStrip>

      <Toolbar>
        <Slot $w={54}><Back /></Slot>
        <Slot $w={56}><Refresh /></Slot>
        <Slot $w={54}><Magnifier /></Slot>
        <AddressBar>
          <Slot $w={46}><Info /></Slot>
          <Url><Host>127.0.0.1</Host>:8000/static/biling.html</Url>
          <Slot $w={50}><ZoomIn /></Slot>
          <Slot $w={51}><ReadAloud /></Slot>
          <Slot $w={50}><Star /></Slot>
        </AddressBar>
        <Slot $w={7} />
        <Slot $w={55}><SplitScreen /></Slot>
        <Slot $w={55}><Favorites /></Slot>
        <Slot $w={55}><Collections /></Slot>
        <Slot $w={55}><Health /></Slot>
        <Slot $w={55}><Dots /></Slot>
        <Slot $w={51}><Copilot /></Slot>
      </Toolbar>

      <Middle>
        <Page>
          <Heading>Biling Buds</Heading>
          <SubHeading>Kanchipuram</SubHeading>
          <Lines>
            <Line>1) Satisfaction is a Rating Loyalty is a Brand. Customised T-shirts with premium quality for super comfort fit.</Line>
            <Line>2) BLING DUDS Amazing lightning Customizable T-shirt</Line>
            <Line>3) Located near Collectorate, near ramanas Bakery</Line>
          </Lines>
        </Page>
        <Sidebar>
          {sideIcons.map((Icon, i) => (
            <Slot key={i} $w={54} $h={50}><Icon /></Slot>
          ))}
          <Divider $top={16} />
          <Slot $w={54} $h={78}><Plus size={15} color="#555" /></Slot>
          <Spacer />
          <Divider />
          <Slot $w={54} $h={55}><Gear /></Slot>
        </Sidebar>
      </Middle>

      <Taskbar>
        <Weather>
          <Haze />
          <WeatherText>
            31°C
            <Muted>Haze</Muted>
          </WeatherText>
        </Weather>
        <StartSlot><WindowsLogo /></StartSlot>
        <SearchPill>
          <Magnifier size={19} sw={2.1} color="#1c1c1c" />
          <SearchLabel>Search</SearchLabel>
          <WaterEarth />
        </SearchPill>
        <Apps>
          {apps.map(({ icon: Icon, letter, badge, active, mark }, i) => (
            <AppButton key={i}>
              <AppTile $active={active}>
                {active && <FrontCard />}
                <IconHolder>
                  {Icon ? <Icon /> : <LetterTile>{letter}</LetterTile>}
                </IconHolder>
              </AppTile>
              {badge && <Badge>{badge}</Badge>}
              {mark && <RunMark $w={mark} />}
            </AppButton>
          ))}
        </Apps>
        <Spacer />
        <Tray>
          <Slot $w={36}><Chevron /></Slot>
          <Lang>ENG<br />IN</Lang>
          <Slot $w={34}><Wifi /></Slot>
          <Slot $w={26}><Mute /></Slot>
          <Slot $w={34}><Battery /></Slot>
          <Clock>11:11<br />22-03-2024</Clock>
          <Slot $w={40}><Bell /></Slot>
          <Slot $w={50}>
            <CopilotTray>
              <Copilot size={28} pre />
              <PreBadge>PRE</PreBadge>
            </CopilotTray>
          </Slot>
          <Slot $w={14} />
        </Tray>
      </Taskbar>
    </Screen>
  );
}
